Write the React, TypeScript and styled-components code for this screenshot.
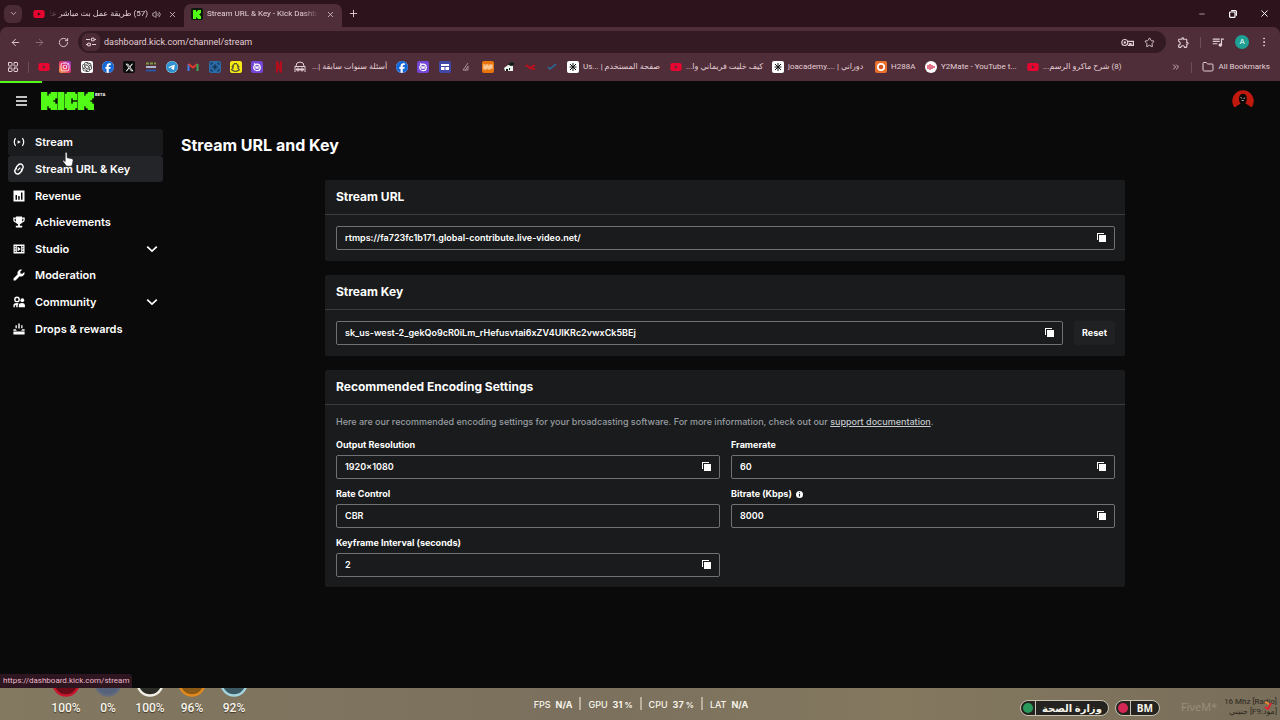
import React from 'react';
import styled, { createGlobalStyle, css } from 'styled-components';
import {
  ArrowLeft, ArrowRight, RotateCw, ChevronDown, X, Plus, Minus, Star, Folder,
  ChevronsRight, LayoutGrid, EllipsisVertical, Volume2,
} from 'lucide-react';
import { FaYoutube, FaInstagram, FaFacebook, FaXTwitter, FaTelegram, FaSnapchat } from 'react-icons/fa6';
import { MdOutlineQueueMusic, MdOutlineExtension } from 'react-icons/md';
import { SiOpenai } from 'react-icons/si';

const chromeFont = "Roboto, 'DejaVu Sans', sans-serif";
const pageFont = "Inter, 'DejaVu Sans', sans-serif";

const GlobalStyle = createGlobalStyle`
  *, *::before, *::after { box-sizing: border-box; }
  body { margin: 0; background: #0a0a0a; color: #fff; font-family: ${pageFont}; }
  button { border: 0; background: none; padding: 0; color: inherit; font: inherit; cursor: pointer; }
  svg { display: block; flex: none; }
`;

const Screen = styled.div`
  min-height: 100vh;
  display: flex;
  flex-direction: column;
`;

/* ---------- browser frame ---------- */

const Browser = styled.header`
  background: #2d141c;
  color: #e3cfd5;
  font-family: ${chromeFont};
  font-size: 8px;
  line-height: 14px;
`;

const TabStrip = styled.div`
  height: 27px;
  display: flex;
  align-items: center;
  padding-left: 4px;
  > :first-child { margin-right: 4px; }
`;

const IconButton = styled.button<{ $size?: number; $fill?: string }>`
  width: ${p => p.$size ?? 18}px;
  height: ${p => p.$size ?? 18}px;
  flex: none;
  display: grid;
  place-items: center;
  border-radius: 6px;
  background: ${p => p.$fill ?? 'transparent'};
`;

const Tab = styled.div<{ $active?: boolean }>`
  height: 23px;
  align-self: flex-end;
  display: flex;
  align-items: center;
  gap: 4px;
  width: 158px;
  padding: 0 5px 3px 7px;
  border-radius: 7px 7px 0 0;
  background: ${p => (p.$active ? '#4f2e39' : 'transparent')};
`;

const TabTitle = styled.span<{ $rtl?: boolean }>`
  flex: 1;
  min-width: 0;
  overflow: hidden;
  white-space: nowrap;
  direction: ${p => (p.$rtl ? 'rtl' : 'ltr')};
  mask-image: linear-gradient(${p => (p.$rtl ? 'to left' : 'to right')}, #000 85%, transparent);
`;

const WindowControls = styled.div`
  margin-left: auto;
  display: flex;
  gap: 13px;
  padding-right: 7px;
`;

const Toolbar = styled.div`
  height: 30px;
  display: flex;
  align-items: center;
  background: #4f2e39;
  border-radius: 7px 7px 0 0;
  padding: 0 7px 0 6px;
  gap: 6px;
`;

const AddressBar = styled.div`
  flex: 1;
  height: 22px;
  display: flex;
  align-items: center;
  gap: 4px;
  padding: 0 8px 0 4px;
  border-radius: 11px;
  background: #341a23;
`;

const AddressInput = styled.input`
  flex: 1;
  min-width: 0;
  border: 0;
  padding: 0;
  background: none;
  color: #e3cfd5;
  font: 9px/14px ${chromeFont};
  outline: none;
`;

const Divider = styled.span`
  width: 1px;
  height: 11px;
  flex: none;
  background: #6d4d58;
`;

const Profile = styled.button`
  width: 14px;
  height: 14px;
  border-radius: 50%;
  background: #1fa095;
  color: #fff;
  font-size: 8px;
  line-height: 14px;
`;

const BookmarkBar = styled.nav`
  height: 24px;
  display: flex;
  align-items: center;
  padding: 0 10px 4px 7px;
  background: #4f2e39;
`;

const BookmarkGroup = styled.div<{ $width: number; $start: number }>`
  width: ${p => p.$width}px;
  margin-left: ${p => p.$start}px;
  flex: none;
  display: flex;
  justify-content: space-between;
`;

const Bookmark = styled.a<{ $width?: number; $rtl?: boolean }>`
  display: flex;
  align-items: center;
  gap: 4px;
  flex: none;
  width: ${p => (p.$width ? `${p.$width}px` : 'auto')};
  color: inherit;
  text-decoration: none;
  white-space: nowrap;
  span { direction: ${p => (p.$rtl ? 'rtl' : 'ltr')}; }
`;

const Favicon = styled.i<{ $bg?: string; $fg?: string; $round?: boolean }>`
  width: 12px;
  height: 12px;
  flex: none;
  display: grid;
  place-items: center;
  border-radius: ${p => (p.$round ? '50%' : '2px')};
  background: ${p => p.$bg ?? 'transparent'};
  color: ${p => p.$fg ?? '#fff'};
`;

const BookmarkEnd = styled.div`
  margin-left: auto;
  display: flex;
  align-items: center;
  gap: 10px;
`;

/* ---------- dashboard ---------- */

const Page = styled.div`
  position: relative;
  flex: 1;
  display: flex;
  flex-direction: column;
  background: #0a0a0a;
`;

const Progress = styled.div`
  width: 42px;
  height: 2px;
  background: #53fc18;
`;

const TopBar = styled.div`
  height: 36px;
  display: flex;
  align-items: center;
  padding: 0 26px 0 15px;
`;

const Logo = styled.a`
  display: flex;
  margin-left: 13px;
  gap: 1px;
  color: #fff;
  text-decoration: none;
  font-weight: 700;
  font-size: 4px;
  line-height: 5px;
`;

const Avatar = styled.button`
  margin-left: auto;
`;

const Columns = styled.div`
  flex: 1;
  display: flex;
  align-items: flex-start;
`;

const Sidebar = styled.nav`
  width: 170px;
  flex: none;
  padding: 10px 7px 0 8px;
`;

const NavList = styled.ul`
  list-style: none;
  margin: 0;
  padding: 0;
  height: 213px;
  display: grid;
  grid-auto-rows: 1fr;
`;

const NavLink = styled.a<{ $state?: 'hover' | 'active' }>`
  height: 100%;
  display: flex;
  align-items: center;
  gap: 10px;
  padding: 0 5px;
  border-radius: 3px;
  color: #fff;
  text-decoration: none;
  font-size: 11px;
  font-weight: 600;
  line-height: 16px;
  ${p => p.$state === 'hover' && css`background: #1a1b1d;`}
  ${p => p.$state === 'active' && css`background: #232529;`}
  span { flex: 1; }
`;

const Main = styled.main`
  flex: 1;
  min-width: 0;
  padding: 14px 11px 24px;
`;

const Title = styled.h1`
  margin: 0 0 23px;
  font-size: 16px;
  line-height: 24px;
  font-weight: 700;
`;

const Cards = styled.div`
  max-width: 800px;
  margin: 0 auto;
  display: grid;
  gap: 14px;
`;

const Card = styled.section`
  background: #191b1c;
  border-radius: 2px;
`;

const CardTitle = styled.h2`
  margin: 0;
  height: 35px;
  padding: 0 11px;
  border-bottom: 1px solid #3b3e40;
  font-size: 12px;
  line-height: 33px;
  font-weight: 700;
`;

const CardBody = styled.div`
  padding: 11px 10px 11px 11px;
  display: flex;
  gap: 11px;
`;

const SettingsBody = styled.div`
  padding: 10px 10px 10px 11px;
`;

const Hint = styled.p`
  margin: 0 0 9px;
  font-size: 9px;
  line-height: 14px;
  font-weight: 500;
  color: #989da1;
  a { color: #c4c8cb; text-underline-offset: 1px; }
`;

const FieldGrid = styled.div`
  display: grid;
  grid-template-columns: 1fr 1fr;
  gap: 8px 11px;
`;

const Label = styled.label`
  display: flex;
  align-items: center;
  gap: 4px;
  margin-bottom: 3px;
  font-size: 9px;
  line-height: 14px;
  font-weight: 700;
`;

const FieldBox = styled.div`
  flex: 1;
  height: 24px;
  display: flex;
  align-items: center;
  padding: 0 7px 0 8px;
  border: 1px solid #6f7274;
  border-radius: 2px;
`;

const FieldInput = styled.input`
  flex: 1;
  min-width: 0;
  border: 0;
  padding: 0;
  background: none;
  outline: none;
  color: #fff;
  font: 600 9px/14px ${pageFont};
`;

const ResetButton = styled.button`
  width: 41px;
  height: 24px;
  border-radius: 2px;
  background: #1f2123;
  font-size: 9px;
  line-height: 14px;
  font-weight: 700;
`;

const StatusUrl = styled.div`
  position: absolute;
  left: 0;
  bottom: 0;
  min-width: 131px;
  height: 14px;
  padding: 0 3px;
  border-radius: 0 3px 0 0;
  background: #2d1620;
  color: #f0b6cb;
  font: 8px/14px ${chromeFont};
`;

const Pointer = styled.svg`
  position: absolute;
  left: 62px;
  top: 71px;
`;

/* ---------- game overlay strip ---------- */

const GameStrip = styled.footer`
  height: 32px;
  flex: none;
  display: grid;
  grid-template-columns: 1fr auto 1fr;
  background: linear-gradient(90deg, #837860, #7a705d 45%, #84785f 70%, #786e5a);
  color: #f8f4ea;
`;

const Gauges = styled.div`
  display: flex;
  padding-left: 45px;
`;

const Gauge = styled.div`
  width: 42px;
  display: flex;
  flex-direction: column;
  align-items: center;
  gap: 4px;
  font: 500 12px/14px Roboto, sans-serif;
  text-shadow: 0 1px 1px #0008;
`;

const Stats = styled.dl`
  margin: 0;
  display: flex;
  padding-top: 9px;
  font: 500 9px/16px Inter, sans-serif;
`;

const Stat = styled.div`
  display: flex;
  gap: 5px;
  padding: 0 7px 0 9px;
  & + & { background: linear-gradient(#b9b09b, #b9b09b) 0 0 / 2px 13px no-repeat; }
  dd { margin: 0; font-weight: 700; }
  small { font-size: 8px; }
`;

const RightHud = styled.div`
  display: flex;
  justify-content: flex-end;
  padding-top: 12px;
  gap: 6px;
`;

const Pill = styled.span<{ $dot: string }>`
  height: 16px;
  display: flex;
  align-items: center;
  border: 1px solid #c9c2b2;
  border-radius: 8px;
  background: #24231f;
  padding-right: 6px;
  font: 700 10px/14px 'Open Sans', 'DejaVu Sans', sans-serif;
  white-space: nowrap;
  &::before {
    content: '';
    width: 10px;
    height: 10px;
    margin: 0 2px;
    border-radius: 50%;
    background: ${p => p.$dot};
  }
  span { border-left: 1px solid #c9c2b2; padding-left: 6px; }
`;

const Watermark = styled.span`
  margin-left: 15px;
  width: 36px;
  font: 11px/14px 'Open Sans', sans-serif;
  color: #9b917c;
`;

const Voice = styled.div`
  position: relative;
  width: 54px;
  margin: -3px 3px 0 0;
  color: #2b261e;
  font: 8px/10px Roboto, 'DejaVu Sans', sans-serif;
  white-space: nowrap;
  text-align: right;
`;

const VoiceLine = styled.div`
  height: 10px;
`;

const VoiceMark = styled.svg`
  position: absolute;
  right: 4px;
  top: 3px;
`;

/* ---------- drawings ---------- */

const letterK = [[0, 0, 3, 9], [3, 2, 1, 5], [4, 1, 1, 7], [5, 0, 3, 3], [5, 3, 2, 1], [5, 4, 1, 1], [5, 5, 2, 1], [5, 6, 3, 3]];
const letterC = [[0, 1, 3, 7], [1, 0, 4, 3], [1, 6, 4, 3], [4, 1, 2, 3], [4, 5, 2, 3]];

const Blocks = ({ at, parts }: { at: number; parts: number[][] }) => (
  <g transform={`translate(${at} 0)`} stroke="#53fc18" strokeWidth=".3">
    {parts.map(([x, y, w, h], i) => <rect key={i} x={x} y={y} width={w} height={h} />)}
  </g>
);

const KickMark = () => (
  <svg width="53" height="18" viewBox="0 0 26.5 9" fill="#53fc18" aria-hidden="true">
    <Blocks at={0} parts={letterK} />
    <Blocks at={8.5} parts={[[0, 0, 3, 9]]} />
    <Blocks at={12} parts={letterC} />
    <Blocks at={18.5} parts={letterK} />
  </svg>
);

const CopyIcon = () => (
  <svg width="10" height="10" viewBox="0 0 10 10" fill="#fff">
    <path d="M0 0h7v1H1v6H0z" />
    <path d="M2 2h7v7H2z" />
  </svg>
);

const Chevron = () => (
  <svg width="12" height="12" viewBox="0 0 12 12" fill="none" stroke="#fff" strokeWidth="1.6">
    <path d="M1.2 3.6 6 8.2l4.8-4.6" />
  </svg>
);

const NavSvg = ({ children }: { children: React.ReactNode }) => (
  <svg width="12" height="12" viewBox="0 0 12 12" fill="#fff" stroke="none">{children}</svg>
);

const navIcons = {
  stream: (
    <NavSvg>
      <path d="M2.6 2.2Q0 6 2.6 9.8M9.4 2.2Q12 6 9.4 9.8" fill="none" stroke="#fff" strokeWidth="1.2" />
      <path d="M4.6 4.2 7.8 6 4.6 7.8z" />
    </NavSvg>
  ),
  link: (
    <NavSvg>
      <g fill="none" stroke="#fff" strokeWidth="1.5">
        <path d="M3.4 6.200Q2.700 4.500 4 3.200L5.200 2a2.800 2.800 0 0 1 4.500.3Q11 4.200 9.600 5.800L8.500 7" />
        <path d="M8.600 5.800Q9.300 7.500 8 8.800L6.800 10a2.800 2.800 0 0 1-4.500-.3Q1 7.800 2.400 6.200L3.500 5" />
        <path d="M4.600 7.400 7.400 4.600" strokeWidth="1.200" />
      </g>
    </NavSvg>
  ),
  revenue: (
    <NavSvg>
      <path fillRule="evenodd" d="M.5.5h11v11H.5zM2.500 5v4.700H4V5zM5.200 6v3.700h1.500V6zM8 2.500v7.200h1.500V2.500z" />
    </NavSvg>
  ),
  trophy: (
    <NavSvg>
      <path fillRule="evenodd" d="M3 .5h6v1h2.700v2.300C11.700 5.500 10.500 6.500 9 6.700 8.400 7.600 7.700 8 6.900 8.200v1.600h2.300v1.700H2.800V9.800h2.300V8.200C4.300 8 3.600 7.600 3 6.700 1.500 6.500.3 5.500.3 3.800V1.500H3zM1.600 2.700V4c0 .7.500 1.200 1.200 1.400V2.700zM9.200 2.700v2.700c.7-.2 1.200-.7 1.200-1.400V2.700z" />
    </NavSvg>
  ),
  studio: (
    <NavSvg>
      <path fillRule="evenodd" d="M.5 1.500h11v9H.5zM1.700 3v1.300h1V3zM1.700 5.300v1.300h1V5.300zM1.700 7.700V9h1V7.700zM9.300 3v1.300h1V3zM9.300 5.300v1.300h1V5.300zM9.300 7.700V9h1V7.700zM3.800 3v6h4.400V3z" />
      <path d="M4.600 3.600 7.700 6 4.600 8.400z" />
    </NavSvg>
  ),
  wrench: (
    <NavSvg>
      <path d="M11.300 2.900 9.300 4.800 7.500 4.500 7.200 2.700 9.100.8A3.500 3.500 0 0 0 4.700 5.300L.5 9.500v2h2l4.200-4.200a3.500 3.500 0 0 0 4.600-4.400z" />
    </NavSvg>
  ),
  community: (
    <NavSvg>
      <circle cx="4" cy="3.400" r="2.200" fill="none" stroke="#fff" strokeWidth="1.400" />
      <path d="M.4 11.300V9.300Q.6 7 4 7l1.500.2-.8 2.300v1.800H3.200V9.200H1.800v2.100z" />
      <circle cx="9.300" cy="4.200" r="1.900" />
      <path d="M5.800 11.300V9Q6 7 9 7q2.700 0 2.900 2v2.300z" />
    </NavSvg>
  ),
  drops: (
    <NavSvg>
      <path d="M5.300.5h1.400v5H5.300zM2.500 2.200h1.300v3H2.500zM8.200 2.200h1.300v3H8.200z" />
      <path d="M.4 6.300h2.400l1 1.500h4.400l1-1.500h2.400v1.400H.4zM.4 8.600h11.200v2.900H.4z" />
    </NavSvg>
  ),
};

const nav: { label: string; icon: keyof typeof navIcons; state?: 'hover' | 'active'; more?: boolean }[] = [
  { label: 'Stream', icon: 'stream', state: 'hover' },
  { label: 'Stream URL & Key', icon: 'link', state: 'active' },
  { label: 'Revenue', icon: 'revenue' },
  { label: 'Achievements', icon: 'trophy' },
  { label: 'Studio', icon: 'studio', more: true },
  { label: 'Moderation', icon: 'wrench' },
  { label: 'Community', icon: 'community', more: true },
  { label: 'Drops & rewards', icon: 'drops' },
];

const YouTubeIcon = () => <Favicon $fg="#e8052f"><FaYoutube size={12} /></Favicon>;
const PurpleIcon = () => (
  <Favicon $bg="#7346d8">
    <svg width="10" height="10" viewBox="0 0 10 10" fill="none" stroke="#fff" strokeWidth="1.300">
      <circle cx="5" cy="5.400" r="3.200" /><path d="M2 1.500 4 3M4 4v2h2V4" />
    </svg>
  </Favicon>
);
const BurstIcon = () => (
  <Favicon $bg="#fff">
    <svg width="10" height="10" viewBox="0 0 10 10" stroke="#111" strokeWidth="1">
      <path d="M5 1v8M1.500 5h7M2 2l6 6M8 2 2 8" />
    </svg>
  </Favicon>
);

type FieldProps = { id: string; value: string; label?: string; copy?: boolean };
const Field = ({ id, value, label, copy = true }: FieldProps) => (
  <FieldBox>
    <FieldInput id={id} value={value} readOnly aria-label={label} />
    {copy && <button type="button" aria-label="Copy"><CopyIcon /></button>}
  </FieldBox>
);

const gauges = [
  { value: '100%', ring: '#c8152d', fill: '#6b0d18' },
  { value: '0%', ring: '#636b7c', fill: '#56617a' },
  { value: '100%', ring: '#f1eee4', fill: '#2c2c26' },
  { value: '96%', ring: '#e38a1b', fill: '#8a5a16' },
  { value: '92%', ring: '#a3d3df', fill: '#3c5a63' },
];

export default function App() {
  return (
    <Screen>
      <GlobalStyle />
      <Browser>
        <TabStrip>
          <IconButton $fill="#4a2b36" aria-label="Search tabs"><ChevronDown size={9} /></IconButton>
          <Tab>
            <YouTubeIcon />
            <TabTitle $rtl>(57) طريقة عمل بث مباشر عا</TabTitle>
            <Volume2 size={9} />
            <IconButton $size={14} aria-label="Close tab"><X size={9} /></IconButton>
          </Tab>
          <Tab $active>
            <Favicon $bg="#0b1a08">
              <svg width="8" height="9" viewBox="0 0 8 9" fill="#53fc18"><Blocks at={0} parts={letterK} /></svg>
            </Favicon>
            <TabTitle>Stream URL &amp; Key - Kick Dashb</TabTitle>
            <IconButton $size={14} aria-label="Close tab"><X size={9} /></IconButton>
          </Tab>
          <IconButton $size={22} aria-label="New tab"><Plus size={11} /></IconButton>
          <WindowControls>
            <IconButton aria-label="Minimize"><Minus size={8} /></IconButton>
            <IconButton aria-label="Restore">
              <svg width="8" height="8" viewBox="0 0 8 8" fill="none" stroke="#fff" strokeWidth="1.200">
                <rect x=".6" y="2" width="5.400" height="5.400" rx="1" /><path d="M2.200.6h4q1.200 0 1.200 1.200v4" />
              </svg>
            </IconButton>
            <IconButton aria-label="Close"><X size={11} color="#fff" /></IconButton>
          </WindowControls>
        </TabStrip>
        <Toolbar>
          <IconButton aria-label="Back"><ArrowLeft size={11} /></IconButton>
          <IconButton aria-label="Forward"><ArrowRight size={11} color="#8d6f79" /></IconButton>
          <IconButton aria-label="Reload"><RotateCw size={11} /></IconButton>
          <AddressBar>
            <IconButton $fill="#4a2b36" aria-label="Site information">
              <svg width="10" height="10" viewBox="0 0 10 10" fill="none" stroke="#e3cfd5" strokeWidth="1.200">
                <path d="M0 2.500h4M6 7.500h4M9 2.500h1M0 7.500h1" /><circle cx="6.800" cy="2.500" r="1.500" /><circle cx="3" cy="7.500" r="1.500" />
              </svg>
            </IconButton>
            <AddressInput aria-label="Address" defaultValue="dashboard.kick.com/channel/stream" />
            <IconButton aria-label="Passwords">
              <svg width="13" height="9" viewBox="0 0 13 9" fill="none" stroke="#e3cfd5" strokeWidth="1.200">
                <circle cx="3.800" cy="4.500" r="3" /><circle cx="3.800" cy="4.500" r=".6" /><path d="M6.700 3.300h5.700v4H10V5.500H8.700v1.800H7" />
              </svg>
            </IconButton>
            <IconButton aria-label="Bookmark"><Star size={11} /></IconButton>
          </AddressBar>
          <IconButton $size={22} aria-label="Extensions"><MdOutlineExtension size={13} /></IconButton>
          <Divider />
          <IconButton $size={22} aria-label="Media"><MdOutlineQueueMusic size={14} /></IconButton>
          <Profile aria-label="Profile">A</Profile>
          <IconButton aria-label="Menu"><EllipsisVertical size={12} /></IconButton>
        </Toolbar>
        <BookmarkBar>
          <LayoutGrid size={12} />
          <BookmarkGroup $width={1} $start={9}><Divider /></BookmarkGroup>
          <BookmarkGroup $width={268} $start={9}>
            <YouTubeIcon />
            <Favicon $bg="linear-gradient(45deg,#f9a03c,#e4316b 50%,#8b3ad1)"><FaInstagram size={10} /></Favicon>
            <Favicon $bg="#fff" $fg="#222"><SiOpenai size={10} /></Favicon>
            <Favicon $bg="#fff" $fg="#1668d6" $round><FaFacebook size={12} /></Favicon>
            <Favicon $bg="#0c0c0c"><FaXTwitter size={9} /></Favicon>
            <Favicon>
              <svg width="12" height="12" viewBox="0 0 12 12" fill="none" strokeWidth="1.800">
                <path d="M1 2.500h10" stroke="#7a9a3e" strokeDasharray="3 1" /><path d="M1 6h10" stroke="#bcc7dd" /><path d="M1 9.500h10" stroke="#2458a8" />
              </svg>
            </Favicon>
            <Favicon $bg="#fff" $fg="#2f93d2" $round><FaTelegram size={12} /></Favicon>
            <Favicon>
              <svg width="12" height="10" viewBox="0 0 12 10" fill="none" strokeWidth="2">
                <path d="M1.500 9V2" stroke="#3f7fe8" /><path d="M1.500 2 6 5.500 10.500 2" stroke="#e23b30" /><path d="M10.500 2v7" stroke="#3aa655" />
              </svg>
            </Favicon>
            <Favicon $bg="#2b6ca8">
              <svg width="12" height="12" viewBox="0 0 12 12" fill="none" stroke="#12304f" strokeWidth="1">
                <path d="M2 2h2M8 2h2M2 10h2M8 10h2M2 2v2M10 2v2M2 8v2M10 8v2M6 3v6M3 6h6M4.500 4.500l3 3M7.500 4.500l-3 3" />
              </svg>
            </Favicon>
            <Favicon $bg="#f5ea12" $fg="#fff">
              <FaSnapchat size={9} stroke="#222" strokeWidth={40} />
            </Favicon>
            <PurpleIcon />
            <Favicon>
              <svg width="8" height="12" viewBox="0 0 8 12" fill="#b20d1c"><path d="M1 0h2l2 5V0h2v12L5 11.500 3 6.500v5L1 12z" /></svg>
            </Favicon>
            <Favicon>
              <svg width="12" height="12" viewBox="0 0 12 12" fill="none" stroke="#e3cfd5" strokeWidth="1">
                <path d="M2 5Q2 1 6 1t4 4M.6 5.500h10.800M1 11V6M11 11V6M2 8.500h8" /><circle cx="4" cy="8.500" r="1.500" /><circle cx="8" cy="8.500" r="1.500" />
              </svg>
            </Favicon>
          </BookmarkGroup>
          <BookmarkGroup $width={74} $start={6}>
            <Bookmark href="#" $rtl><span>أسئلة سنوات سابقة |...</span></Bookmark>
          </BookmarkGroup>
          <BookmarkGroup $width={162} $start={10}>
            <Favicon $bg="#fff" $fg="#1668d6" $round><FaFacebook size={12} /></Favicon>
            <PurpleIcon />
            <Favicon $bg="#4149a8">
              <svg width="8" height="7" viewBox="0 0 8 7" fill="#fff"><path d="M0 0h8v2H0zM0 3h3.500v3H0zM4.500 3H8v3H4.500z" /></svg>
            </Favicon>
            <Favicon>
              <svg width="8" height="10" viewBox="0 0 8 10" fill="none" stroke="#a68c94"><path d="M6 1 1 8h5V4L3 9" /></svg>
            </Favicon>
            <Favicon $bg="#e8740c">
              <svg width="10" height="6" viewBox="0 0 10 6" fill="none" stroke="#ffe0bd" strokeWidth="1.100"><path d="M1 0v5h2V1h2v4h2V1h2v4M1 3h8" /></svg>
            </Favicon>
            <Favicon>
              <svg width="12" height="12" viewBox="0 0 12 12"><path d="M1 7l4-3 5 1v5H2z" fill="#eaf3ee" /><path d="M5 3l4-2 3 2-4 2zM3 8h2v2H3zM6 7h1v2H6z" fill="#0d2018" /></svg>
            </Favicon>
            <Favicon>
              <svg width="12" height="8" viewBox="0 0 12 8" fill="none" stroke="#c00d1f" strokeWidth="2"><path d="M1 2l4 3 5-3M5 5l5 1" /></svg>
            </Favicon>
            <Favicon>
              <svg width="10" height="8" viewBox="0 0 10 8" fill="none" stroke="#2a6f9c" strokeWidth="1.600"><path d="M1 4l2 2 6-5" /></svg>
            </Favicon>
          </BookmarkGroup>
          <BookmarkGroup $width={553} $start={9}>
            <Bookmark href="#" $width={103}><BurstIcon /><span>Us... | صفحة المستخدم</span></Bookmark>
            <Bookmark href="#" $width={102} $rtl><YouTubeIcon /><span>كيف خليت فريماني وا...</span></Bookmark>
            <Bookmark href="#" $width={103}><BurstIcon /><span>joacademy.... | دوراني</span></Bookmark>
            <Bookmark href="#" $width={50}>
              <Favicon $bg="#e8702a">
                <svg width="8" height="8" viewBox="0 0 8 8"><circle cx="4" cy="4" r="4" fill="#fff" /><circle cx="4" cy="4" r="2.300" fill="#d9531e" /></svg>
              </Favicon>
              <span>H288A</span>
            </Bookmark>
            <Bookmark href="#" $width={102}>
              <Favicon $bg="#fff" $round>
                <svg width="8" height="6" viewBox="0 0 8 6" stroke="#d3173c" strokeWidth="1.200"><path d="M1 1v4M3 0v6M5 1v4M7 2v2" /></svg>
              </Favicon>
              <span>Y2Mate - YouTube t...</span>
            </Bookmark>
            <Bookmark href="#" $width={93} $rtl><YouTubeIcon /><span>(8) شرح ماكرو الرسم...</span></Bookmark>
          </BookmarkGroup>
          <BookmarkEnd>
            <ChevronsRight size={10} />
            <Divider />
            <Bookmark href="#"><Folder size={12} /><span>All Bookmarks</span></Bookmark>
          </BookmarkEnd>
        </BookmarkBar>
      </Browser>

      <Page>
        <Progress />
        <TopBar>
          <button type="button" aria-label="Menu">
            <svg width="13" height="10" viewBox="0 0 13 10" fill="none" stroke="#fff" strokeWidth="1.400"><path d="M1 1h11M1 5h11M1 9h11" /></svg>
          </button>
          <Logo href="#" aria-label="Kick beta"><KickMark /><span>BETA</span></Logo>
          <Avatar type="button" aria-label="Account">
            <svg width="22" height="22" viewBox="0 0 22 22">
              <circle cx="11" cy="11" r="10.700" fill="#c2190f" />
              <path d="M3 18.300C4.500 15 7.500 14.800 8.500 13.500 6 10 6.500 4.500 10.500 3.800c4.500-.5 5.500 5 3 9.700 1.500 1.300 4.500 1.500 6 4.800A10.700 10.700 0 0 1 3 18.300z" fill="#0b0808" />
              <path d="M2 17h18v5H2z" fill="#0a0a0a" />
              <path d="M8.500 7.500l1.600.8M11.500 8.600l1.700-.8M9.700 10.500h2" stroke="#e8dedb" strokeWidth=".8" />
            </svg>
          </Avatar>
        </TopBar>
        <Columns>
          <Sidebar aria-label="Dashboard">
            <NavList>
              {nav.map(item => (
                <li key={item.label}>
                  <NavLink href="#" $state={item.state}>
                    {navIcons[item.icon]}
                    <span>{item.label}</span>
                    {item.more && <Chevron />}
                  </NavLink>
                </li>
              ))}
            </NavList>
          </Sidebar>
          <Main>
            <Title>Stream URL and Key</Title>
            <Cards>
              <Card>
                <CardTitle>Stream URL</CardTitle>
                <CardBody>
                  <Field id="url" label="Stream URL" value="rtmps://fa723fc1b171.global-contribute.live-video.net/" />
                </CardBody>
              </Card>
              <Card>
                <CardTitle>Stream Key</CardTitle>
                <CardBody>
                  <Field id="key" label="Stream Key" value="sk_us-west-2_gekQo9cR0iLm_rHefusvtai6xZV4UIKRc2vwxCk5BEj" />
                  <ResetButton type="button">Reset</ResetButton>
                </CardBody>
              </Card>
              <Card>
                <CardTitle>Recommended Encoding Settings</CardTitle>
                <SettingsBody>
                  <Hint>
                    Here are our recommended encoding settings for your broadcasting software. For more information, check out our{' '}
                    <a href="#">support documentation</a>.
                  </Hint>
                  <FieldGrid>
                    <div><Label htmlFor="resolution">Output Resolution</Label><Field id="resolution" value="1920×1080" /></div>
                    <div><Label htmlFor="framerate">Framerate</Label><Field id="framerate" value="60" /></div>
                    <div><Label htmlFor="rate">Rate Control</Label><Field id="rate" value="CBR" copy={false} /></div>
                    <div>
                      <Label htmlFor="bitrate">
                        Bitrate (Kbps)
                        <svg width="7" height="7" viewBox="0 0 7 7"><circle cx="3.500" cy="3.500" r="3.500" fill="#fff" /><path d="M3.500 1.200v1M3.500 2.900v2.700" stroke="#191b1c" strokeWidth="1.100" /></svg>
                      </Label>
                      <Field id="bitrate" value="8000" />
                    </div>
                    <div><Label htmlFor="keyframe">Keyframe Interval (seconds)</Label><Field id="keyframe" value="2" /></div>
                  </FieldGrid>
                </SettingsBody>
              </Card>
            </Cards>
          </Main>
        </Columns>
        <StatusUrl>https://dashboard.kick.com/stream</StatusUrl>
        <Pointer width="12" height="16" viewBox="0 0 12 16" fill="#fff" stroke="#222" strokeWidth=".6">
          <path d="M3.200 1.200q0-1 .9-1t1 1v4.500l4.800 1q1.300.3 1.200 1.600l-.7 4-1 1.900H4.600L1 9.500q-.5-1 .5-1.200l1.700 1.200z" />
        </Pointer>
      </Page>

      <GameStrip>
        <Gauges>
          {gauges.map((g, i) => (
            <Gauge key={i}>
              <svg width="28" height="9" viewBox="0 5 28 9">
                <circle cx="14" cy="0" r="12.500" fill={g.fill} stroke={g.ring} strokeWidth="2.400" />
              </svg>
              {g.value}
            </Gauge>
          ))}
        </Gauges>
        <Stats>
          <Stat><dt>FPS</dt><dd>N/A</dd></Stat>
          <Stat><dt>GPU</dt><dd>31 <small>%</small></dd></Stat>
          <Stat><dt>CPU</dt><dd>37 <small>%</small></dd></Stat>
          <Stat><dt>LAT</dt><dd>N/A</dd></Stat>
        </Stats>
        <RightHud>
          <Pill $dot="#279a5c"><span>وزارة الصحة</span></Pill>
          <Pill $dot="#d52753"><span>BM</span></Pill>
          <Watermark>FiveM*</Watermark>
          <Voice>
            <VoiceLine>16 Mhz [Radio]</VoiceLine>
            <VoiceLine>جنيني [F9:مود]</VoiceLine>
            <VoiceMark width="10" height="10" viewBox="0 0 10 10" fill="none" strokeWidth="2">
              <path d="M2 2l4 2" stroke="#e08a3a" /><path d="M2 7l3 2 3-6" stroke="#e0232f" />
            </VoiceMark>
          </Voice>
        </RightHud>
      </GameStrip>
    </Screen>
  );
}
